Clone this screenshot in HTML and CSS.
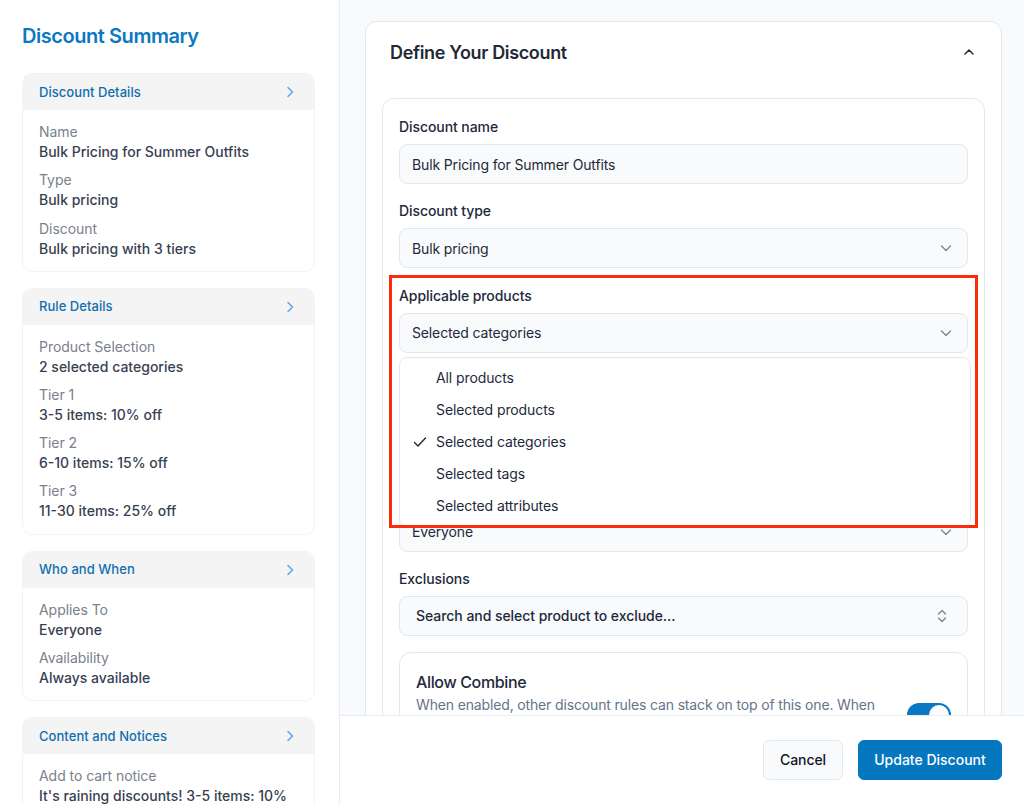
FILE: index.html
```html
<!DOCTYPE html>
<html lang="en">
<head>
<meta charset="utf-8">
<title>Discount Summary</title>
<link rel="stylesheet" href="styles.css">
</head>
<body>
<div class="app">
  <aside class="sidebar">
    <h1 class="side-title">Discount Summary</h1>

    <section class="sum-card">
      <header class="sum-head"><span>Discount Details</span><svg class="sum-arrow" viewBox="0 0 10 14"><path d="M3 2.5 7.5 7 3 11.5"/></svg></header>
      <div class="sum-body">
        <div class="sum-item"><div class="sum-key">Name</div><div class="sum-val">Bulk Pricing for Summer Outfits</div></div>
        <div class="sum-item"><div class="sum-key">Type</div><div class="sum-val">Bulk pricing</div></div>
        <div class="sum-item"><div class="sum-key">Discount</div><div class="sum-val">Bulk pricing with 3 tiers</div></div>
      </div>
    </section>

    <section class="sum-card">
      <header class="sum-head"><span>Rule Details</span><svg class="sum-arrow" viewBox="0 0 10 14"><path d="M3 2.5 7.5 7 3 11.5"/></svg></header>
      <div class="sum-body">
        <div class="sum-item"><div class="sum-key">Product Selection</div><div class="sum-val">2 selected categories</div></div>
        <div class="sum-item"><div class="sum-key">Tier 1</div><div class="sum-val">3-5 items: 10% off</div></div>
        <div class="sum-item"><div class="sum-key">Tier 2</div><div class="sum-val">6-10 items: 15% off</div></div>
        <div class="sum-item"><div class="sum-key">Tier 3</div><div class="sum-val">11-30 items: 25% off</div></div>
      </div>
    </section>

    <section class="sum-card">
      <header class="sum-head"><span>Who and When</span><svg class="sum-arrow" viewBox="0 0 10 14"><path d="M3 2.5 7.5 7 3 11.5"/></svg></header>
      <div class="sum-body">
        <div class="sum-item"><div class="sum-key">Applies To</div><div class="sum-val">Everyone</div></div>
        <div class="sum-item"><div class="sum-key">Availability</div><div class="sum-val">Always available</div></div>
      </div>
    </section>

    <section class="sum-card">
      <header class="sum-head"><span>Content and Notices</span><svg class="sum-arrow" viewBox="0 0 10 14"><path d="M3 2.5 7.5 7 3 11.5"/></svg></header>
      <div class="sum-body">
        <div class="sum-item"><div class="sum-key">Add to cart notice</div><div class="sum-val">It's raining discounts! 3-5 items: 10%</div></div>
      </div>
    </section>
  </aside>

  <main class="main">
    <div class="scroll">
      <section class="panel">
        <header class="panel-head">
          <h2 class="panel-title">Define Your Discount</h2>
          <svg class="panel-caret" viewBox="0 0 12 12"><path d="M2 8 6 4l4 4"/></svg>
        </header>
        <div class="form-card">
          <div class="field">
            <div class="label">Discount name</div>
            <div class="control">Bulk Pricing for Summer Outfits</div>
          </div>
          <div class="field field-wide">
            <div class="label">Discount type</div>
            <div class="control">Bulk pricing<svg class="chev" viewBox="0 0 12 12"><path d="M1.5 4 6 8.5 10.500 4"/></svg></div>
          </div>
          <div class="field field-menu">
            <div class="label">Applicable products</div>
            <div class="control control-lift">Selected categories<svg class="chev" viewBox="0 0 12 12"><path d="M1.5 4 6 8.500 10.500 4"/></svg></div>
            <ul class="menu">
              <li class="menu-item">All products</li>
              <li class="menu-item">Selected products</li>
              <li class="menu-item"><svg class="tick" viewBox="0 0 14 14"><path d="M1.500 7.500 5 11l7.500-8"/></svg>Selected categories</li>
              <li class="menu-item">Selected tags</li>
              <li class="menu-item">Selected attributes</li>
            </ul>
          </div>
          <div class="field">
            <div class="control control-lift">Everyone<svg class="chev" viewBox="0 0 12 12"><path d="M1.500 4 6 8.500 10.500 4"/></svg></div>
          </div>
          <div class="field field-tight">
            <div class="label">Exclusions</div>
            <div class="control control-lift control-search">Search and select product to exclude...<svg class="updown" viewBox="0 0 12 16"><path d="M2.500 6 6 2.500 9.500 6M2.500 10 6 13.500 9.500 10"/></svg></div>
          </div>
          <div class="combine">
            <div class="combine-title">Allow Combine</div>
            <div class="combine-row">
              <p class="combine-text">When enabled, other discount rules can stack on top of this one. When</p>
              <span class="toggle"><span class="knob"></span></span>
            </div>
          </div>
        </div>
      </section>
    </div>
    <footer class="footer">
      <button class="btn btn-cancel">Cancel</button>
      <button class="btn btn-primary">Update Discount</button>
    </footer>
  </main>
  <div class="annot"></div>
</div>
</body>
</html>
```

FILE: styles.css
```css
* { box-sizing: border-box; }
html, body { margin: 0; height: 100%; }
body { font-family: Inter, "Liberation Sans", sans-serif; color: #1e293b; background: #fff; overflow: hidden; }

.app { position: relative; display: flex; height: 804px; overflow: hidden; }

/* Sidebar */
.sidebar { width: 340px; flex: none; padding: 23px 24px 0 22px; background: #fff; border-right: 1px solid #e8edf3; overflow: hidden; }
.side-title { margin: 0 0 23px; font-size: 20px; line-height: 27px; font-weight: 600; color: #0a78c2; letter-spacing: -0.45px; }
.sum-card { margin-bottom: 16px; border: 1px solid #f1f3f5; border-radius: 10px; overflow: hidden; background: #fff; }
.sum-head { display: flex; align-items: center; justify-content: space-between; height: 37px; margin: -1px -1px 0; padding: 1px 17px 0; background: #f4f4f5; font-size: 13px; line-height: 17px; font-weight: 500; color: #0f6fae; letter-spacing: 0.05px; }
.sum-arrow { width: 10px; height: 14px; fill: none; stroke: #5aa6ec; stroke-width: 1.5; stroke-linecap: round; stroke-linejoin: round; margin-right: 3px; }
.sum-body { display: flex; flex-direction: column; gap: 8.15px; padding: 12.25px 16px 12.2px; }
.sum-key { font-size: 14px; line-height: 20px; color: #7a808c; letter-spacing: -0.05px; }
.sum-val { font-size: 14px; line-height: 20px; color: #374151; font-weight: 500; white-space: nowrap; }

/* Main */
.main { flex: 1; min-width: 0; display: flex; flex-direction: column; background: #f8fafc; }
.scroll { flex: 1; min-height: 0; overflow: hidden; padding: 21px 22px 0 25px; }
.panel { background: #fff; border: 1px solid #e2e8f0; border-radius: 12px; padding: 0 16px 16px; }
.panel-head { display: flex; align-items: center; justify-content: space-between; height: 60px; margin-bottom: 16px; padding: 0 10px 0 8px; }
.panel-title { margin: 0; padding-top: 2px; font-size: 18px; font-weight: 600; line-height: 26px; color: #1f2937; letter-spacing: -0.35px; }
.panel-caret { width: 12px; height: 12px; fill: none; stroke: #1f2937; stroke-width: 1.5; stroke-linecap: round; stroke-linejoin: round; }

.form-card { border: 1px solid #e2e8f0; border-radius: 12px; padding: 18px 16px 16px; }
.field { margin-bottom: 17px; }
.field-wide { margin-bottom: 18px; }
.field-tight { margin-bottom: 16px; }
.label { font-size: 14px; line-height: 20px; font-weight: 500; color: #1e293b; margin-bottom: 7px; letter-spacing: -0.08px; }
.control { display: flex; align-items: center; justify-content: space-between; height: 40px; padding: 0 15px 0 12px; background: #f8fafc; border: 1px solid #e2e8f0; border-radius: 8px; font-size: 14px; color: #1e293b; letter-spacing: -0.14px; }
.control-lift { padding-bottom: 1px; }
.control-search { padding-left: 16px; padding-right: 19px; font-weight: 500; letter-spacing: -0.05px; }
.chev { width: 12px; height: 12px; fill: none; stroke: #7b8494; stroke-width: 1.3; stroke-linecap: round; stroke-linejoin: round; }
.updown { width: 12px; height: 16px; fill: none; stroke: #7b8494; stroke-width: 1.3; stroke-linecap: round; stroke-linejoin: round; }

.field-menu { position: relative; margin-bottom: 159px; }
.menu { position: absolute; top: 71px; left: 0; right: -3px; z-index: 2; margin: 0; padding: 4px; list-style: none; background: #fff; border: 1px solid #e2e8f0; border-radius: 8px; }
.menu-item { position: relative; height: 32px; padding-left: 32px; font-size: 14px; line-height: 32px; color: #1e293b; letter-spacing: -0.1px; }
.tick { position: absolute; left: 9px; top: 9px; width: 14px; height: 14px; fill: none; stroke: #1e293b; stroke-width: 1.4; stroke-linecap: round; stroke-linejoin: round; }

.combine { border: 1px solid #e2e8f0; border-radius: 12px; padding: 19px 16px 16px; }
.combine-title { font-size: 16px; line-height: 20px; font-weight: 500; color: #1e293b; margin-bottom: 3px; letter-spacing: -0.35px; }
.combine-row { display: flex; align-items: flex-start; justify-content: space-between; gap: 16px; }
.combine-text { margin: 0; width: 470px; font-size: 14px; line-height: 20px; color: #64748b; letter-spacing: -0.15px; }
.toggle { flex: none; display: flex; justify-content: flex-end; align-items: center; width: 44px; height: 24px; margin-top: 8px; padding: 2px; background: #0a78c2; border-radius: 12px; }
.knob { width: 20px; height: 20px; background: #fff; border-radius: 50%; }

/* Footer */
.footer { flex: none; display: flex; justify-content: flex-end; gap: 15px; height: 89px; padding: 24px 22px 0 0; background: #fff; border-top: 1px solid #e8edf3; }
.btn { height: 40px; padding: 0 15px 2px; border-radius: 6px; font-family: inherit; font-size: 14px; font-weight: 500; }
.btn-cancel { width: 80px; background: #f8fafc; border: 1px solid #e2e8f0; color: #0f172a; letter-spacing: -0.1px; }
.btn-primary { width: 144px; background: #0477bf; border: 1px solid #0477bf; color: #fff; }

/* Red annotation frame over the screenshot */
.annot { position: absolute; left: 389px; top: 275px; width: 589px; height: 253px; border: 3px solid #fb2c0c; z-index: 5; pointer-events: none; }
```
